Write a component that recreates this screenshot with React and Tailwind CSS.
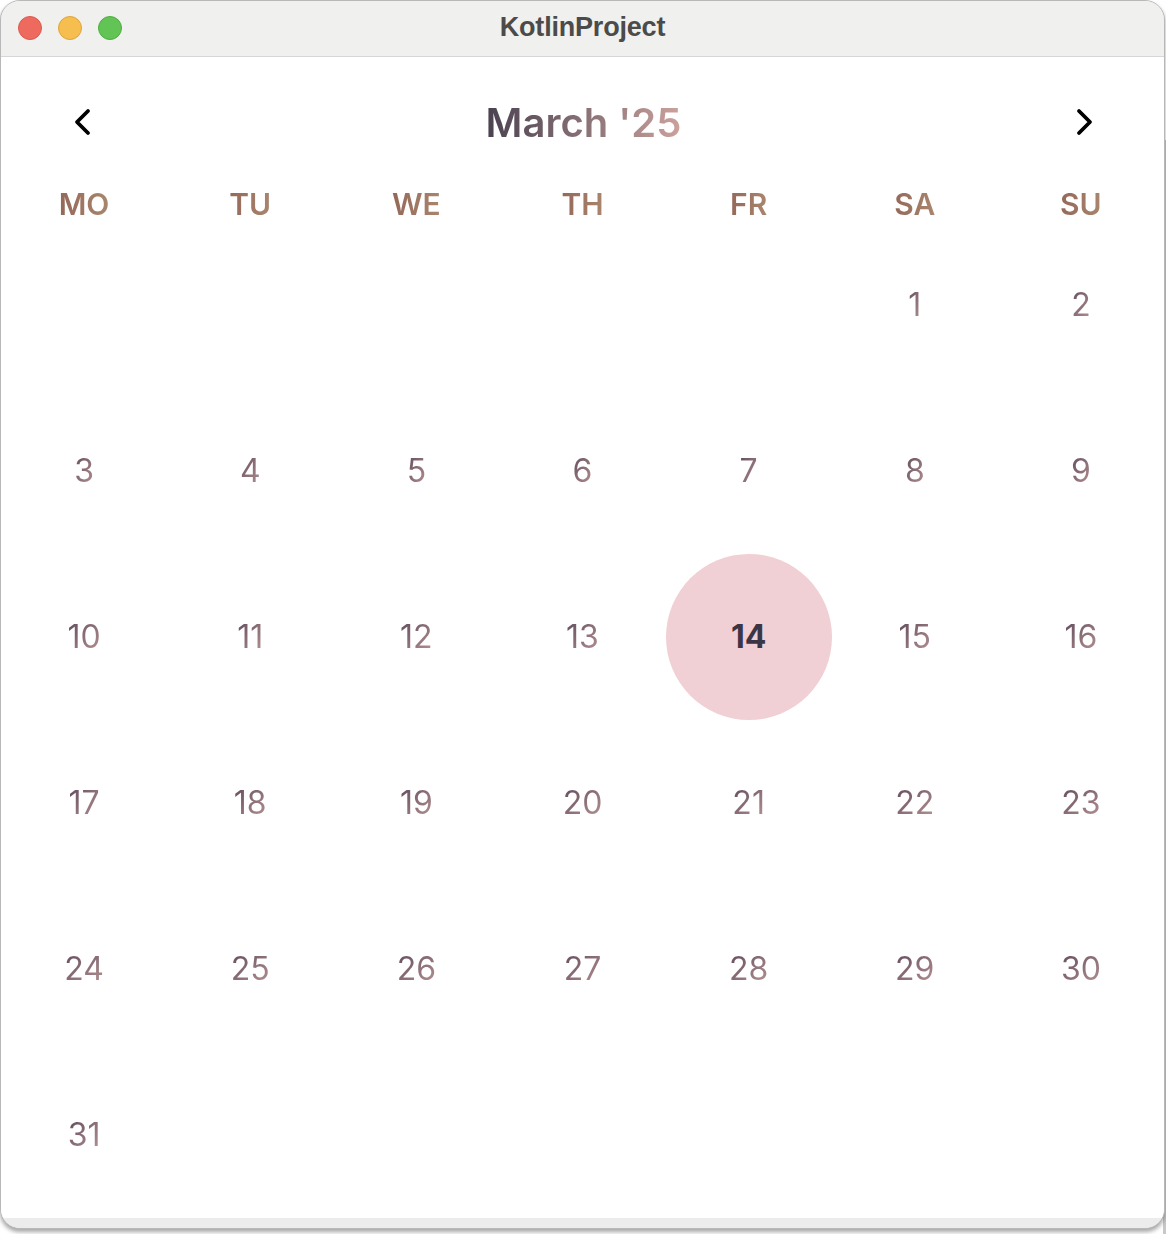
import {useState} from "react";

const WEEKDAYS = ["MO", "TU", "WE", "TH", "FR", "SA", "SU"];

// march 2025 starts on a saturday
function buildCells() {
    const cells = [];
    for (let i = 0; i < 5; i++) cells.push(null);
    for (let d = 1; d <= 31; d++) cells.push(d);
    while (cells.length < 42) cells.push(null);
    return cells;
}

function Chevron({dir}) {
    const pts = dir === "left" ? "19,3 8,14 19,25" : "9,3 20,14 9,25";
    return (
        <svg width="28" height="28" viewBox="0 0 28 28" fill="none">
            <polyline points={pts} stroke="#000" strokeWidth="3.8" strokeLinecap="round" strokeLinejoin="round"/>
        </svg>
    );
}

function DayCell({day, selected}) {
    if (!day) return <div className="h-[166px]"/>;
    return (
        <div className="h-[166px] flex items-center justify-center">
            {selected ? (
                <div className="w-[166px] h-[166px] rounded-full bg-[#f0d0d4] flex items-center justify-center">
                    <span className="text-[32px] font-bold text-[#3b3645] leading-none">{day}</span>
                </div>
            ) : (
                <span
                    className="text-[32px] leading-none bg-linear-to-br from-[#624c5c] to-[#b89494] bg-clip-text text-transparent">
                    {day}
                </span>
            )}
        </div>
    );
}

export default function App() {
    const [selected] = useState(14);
    const cells = buildCells();

    return (
        <div className="w-[1166px] h-[1234px] bg-white relative overflow-hidden"
             style={{fontFamily: "Inter, 'Noto Sans', sans-serif"}}>
            <div className="absolute right-0 top-[140px] w-[3px] h-[1100px] bg-[#c8c8c8]"/>
            <div
                className="absolute left-0 top-0 w-[1165px] h-[1229px] rounded-[20px] border border-[#b8b8b8] bg-[#ececec] overflow-hidden shadow-[0_3px_4px_rgba(0,0,0,0.35)] flex flex-col">
                {/* barra titolo */}
                <div className="h-[56px] bg-[#f0f0ee] border-b border-[#d6d6d6] relative flex items-center justify-center">
                    <div className="absolute left-[17px] top-[15px] flex gap-[16px]">
                        <div className="w-[24px] h-[24px] rounded-full bg-[#ef6a5e] border border-[#d85a4f]"/>
                        <div className="w-[24px] h-[24px] rounded-full bg-[#f5be4f] border border-[#dca53c]"/>
                        <div className="w-[24px] h-[24px] rounded-full bg-[#61c454] border border-[#4fad42]"/>
                    </div>
                    <span className="text-[27px] font-bold text-[#4b4b4b] tracking-[-0.2px] -mt-[2px]"
                          style={{fontFamily: "'Liberation Sans', Inter, sans-serif"}}>KotlinProject</span>
                </div>

                <div className="bg-white flex flex-col">
                    {/* header mese */}
                    <div className="h-[129px] flex items-center justify-between pl-[68px] pr-[66px]">
                        <button className="w-[28px] h-[28px] flex items-center justify-center"><Chevron dir="left"/></button>
                        <span
                            className="text-[40px] font-semibold leading-none pt-[2px] bg-linear-to-r from-[#4a4250] to-[#cca29c] bg-clip-text text-transparent">
                            March '25
                        </span>
                        <button className="w-[28px] h-[28px] flex items-center justify-center"><Chevron dir="right"/></button>
                    </div>

                    {/* giorni settimana */}
                    <div className="grid grid-cols-7 h-[36px] items-center">
                        {WEEKDAYS.map((w) => (
                            <div key={w} className="flex justify-center">
                                <span
                                    className="text-[30px] font-semibold leading-none bg-linear-to-r from-[#946858] to-[#aa866e] bg-clip-text text-transparent">
                                    {w}
                                </span>
                            </div>
                        ))}
                    </div>

                    <div className="grid grid-cols-7">
                        {cells.map((d, i) => (
                            <DayCell key={i} day={d} selected={d === selected}/>
                        ))}
                    </div>
                </div>
                <div className="flex-1 bg-[#ececec]"/>
            </div>
        </div>
    );
}
